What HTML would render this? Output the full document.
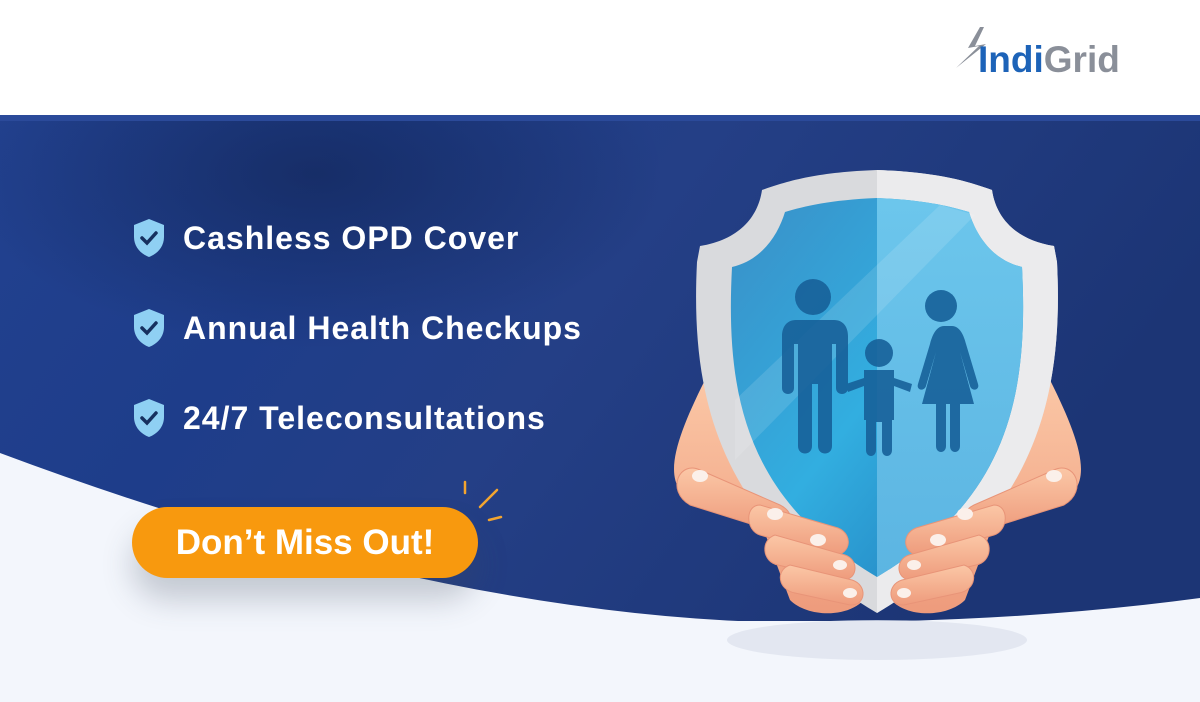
<!DOCTYPE html>
<html><head><meta charset="utf-8"><style>
*{margin:0;padding:0;box-sizing:border-box}
body{width:1200px;height:702px;overflow:hidden;background:#f3f6fc;font-family:"Liberation Sans",sans-serif;position:relative}
.hdr{position:absolute;left:0;top:0;width:1200px;height:115px;background:#fff}
.bar{position:absolute;left:0;top:115px;width:1200px;height:6px;background:#2b4a9a}
.item{position:absolute;left:132px;color:#fff;font-weight:bold;font-size:32px;display:flex;align-items:center;letter-spacing:1px}
.item svg{margin-right:17px}
.btn{position:absolute;left:132px;top:507px;width:346px;height:71px;border-radius:36px;background:#f8990e;color:#fff;font-weight:bold;font-size:35px;text-align:center;line-height:71px;box-shadow:0 22px 30px rgba(60,70,90,0.25)}
</style></head><body>
<div class="hdr"></div>
<div class="bar"></div>
<svg width="1200" height="702" style="position:absolute;left:0;top:0">
<defs>
<linearGradient id="bg" x1="0" y1="0" x2="1" y2="0.3">
<stop offset="0" stop-color="#22418f"/><stop offset="0.3" stop-color="#1e3d8a"/><stop offset="0.55" stop-color="#243f86"/><stop offset="1" stop-color="#1c3575"/></linearGradient>
<radialGradient id="dk" cx="0.45" cy="0.15" r="0.5"><stop offset="0" stop-color="#0f1e45" stop-opacity="0.5"/><stop offset="1" stop-color="#0f1e45" stop-opacity="0"/></radialGradient>
<linearGradient id="sl" x1="0" y1="0" x2="1" y2="1"><stop offset="0" stop-color="#3a8fc7"/><stop offset="0.5" stop-color="#32aee0"/><stop offset="1" stop-color="#1f78b8"/></linearGradient>
<linearGradient id="sr" x1="0" y1="0" x2="0" y2="1"><stop offset="0" stop-color="#6cc6ec"/><stop offset="1" stop-color="#5cb5e2"/></linearGradient>
<linearGradient id="hd" x1="0" y1="0" x2="0" y2="1"><stop offset="0" stop-color="#fbc7a6"/><stop offset="1" stop-color="#ee9b7c"/></linearGradient>
</defs>
<rect x="0" y="121" width="1200" height="500" fill="url(#bg)"/>
<rect x="0" y="121" width="700" height="350" fill="url(#dk)"/>
<path d="M0,453 Q420,610 760,622 Q1000,625 1200,598 L1200,702 L0,702Z" fill="#f3f6fc"/>
<g stroke="#f3a530" stroke-width="2.5" stroke-linecap="round">
<line x1="465" y1="482" x2="465" y2="493"/><line x1="497" y1="490" x2="480" y2="507"/><line x1="489" y1="520" x2="501" y2="517"/></g>
<ellipse cx="877" cy="640" rx="150" ry="20" fill="#dfe4ee" opacity="0.8"/>
<path d="M705,380 C680,430 665,470 680,490 C700,505 730,510 760,520 L790,600 C810,620 860,618 870,590 L862,540 C840,500 780,480 740,470 Z" fill="url(#hd)"/>
<path d="M1050,380 C1075,430 1090,470 1075,490 C1055,505 1025,510 995,520 L965,600 C945,620 895,618 885,590 L893,540 C915,500 975,480 1015,470 Z" fill="url(#hd)"/>
<path d="M877,170 C820,172 790,180 762,190 C758,218 738,240 700,246 L697,262 C690,400 720,520 877,613 C1034,520 1064,400 1057,262 L1054,246 C1016,240 996,218 992,190 C964,180 934,172 877,170Z" fill="#d9dadd"/>
<path d="M877,170 C934,172 964,180 992,190 C996,218 1016,240 1054,246 L1057,262 C1064,400 1034,520 877,613Z" fill="#ebebed"/>
<path d="M877,198 C830,200 805,206 785,212 C778,235 762,260 732,267 C725,400 748,500 877,577 C1006,500 1029,400 1022,267 C992,260 976,235 969,212 C949,206 924,200 877,198Z" fill="url(#sl)"/>
<path d="M877,198 C924,200 949,206 969,212 C976,235 992,260 1022,267 C1029,400 1006,500 877,577Z" fill="url(#sr)"/>
<path d="M735,400 L940,205 L975,215 L735,460Z" fill="#ffffff" opacity="0.12"/>
<g fill="#17619a" opacity="0.9">
<circle cx="813" cy="297" r="18"/>
<path d="M792,320 h42 c10,0 14,8 14,16 v52 c0,8 -12,8 -12,0 v-44 h-4 v102 c0,10 -14,10 -14,0 v-62 h-6 v62 c0,10 -14,10 -14,0 v-102 h-4 v44 c0,8 -12,8 -12,0 v-52 c0,-8 4,-16 14,-16z"/>
<circle cx="941" cy="306" r="16"/>
<path d="M930,326 h22 c8,0 12,10 14,18 l12,40 c2,6 -6,8 -8,2 l-10,-34 l14,52 h-14 v42 c0,8 -10,8 -10,0 v-42 h-4 v42 c0,8 -10,8 -10,0 v-42 h-14 l14,-52 l-10,34 c-2,6 -10,4 -8,-2 l12,-40 c2,-8 6,-18 14,-18z"/>
<circle cx="879" cy="353" r="14"/>
<path d="M864,370 h30 v50 h-2 v30 c0,8 -10,8 -10,0 v-28 h-6 v28 c0,8 -10,8 -10,0 v-30 h-2z"/>
<path d="M846,384 L864,378 L864,386 L848,392Z M894,378 L912,384 L910,392 L894,386Z"/>
</g>
<g fill="url(#hd)" stroke="#e89478" stroke-width="1">
<path d="M700,470 C680,460 665,490 690,505 L770,530 C790,535 800,515 780,505Z"/>
<path d="M760,505 C745,505 745,530 760,535 L830,555 C850,558 855,535 838,528Z"/>
<path d="M775,535 C760,540 762,562 778,565 L840,580 C858,582 860,560 845,555Z"/>
<path d="M790,565 C775,570 778,590 795,593 L850,605 C866,606 868,585 852,580Z"/>
<path d="M1054,470 C1074,460 1089,490 1064,505 L984,530 C964,535 954,515 974,505Z"/>
<path d="M994,505 C1009,505 1009,530 994,535 L924,555 C904,558 899,535 916,528Z"/>
<path d="M979,535 C994,540 992,562 976,565 L914,580 C896,582 894,560 909,555Z"/>
<path d="M964,565 C979,570 976,590 959,593 L904,605 C888,606 886,585 902,580Z"/>
</g>
<g fill="#fbf0ea">
<ellipse cx="700" cy="476" rx="8" ry="6"/><ellipse cx="775" cy="514" rx="8" ry="6"/><ellipse cx="818" cy="540" rx="8" ry="6"/><ellipse cx="840" cy="565" rx="7" ry="5"/><ellipse cx="850" cy="593" rx="7" ry="5"/>
<ellipse cx="1054" cy="476" rx="8" ry="6"/><ellipse cx="965" cy="514" rx="8" ry="6"/><ellipse cx="938" cy="540" rx="8" ry="6"/><ellipse cx="914" cy="565" rx="7" ry="5"/><ellipse cx="904" cy="593" rx="7" ry="5"/>
</g>
<path d="M980,27 L968,48 L979,46 L956,68 L986,44 L975,46 L984,27 Z" fill="#8a8f99"/>
<text x="978" y="72" font-family="Liberation Sans,sans-serif" font-weight="bold" font-size="37" fill="#1d63b8">Indi<tspan fill="#8a8f99">Grid</tspan></text>
</svg>
<div class="item" style="top:217px"><svg width="34" height="42" viewBox="0 0 34 42"><path d="M17,2 L32,8 V20 C32,30 25,37 17,40 C9,37 2,30 2,20 V8Z" fill="#8fd0f3"/><path d="M10,21 L15,26 L24,16" stroke="#16305f" stroke-width="3.5" fill="none" stroke-linecap="round"/></svg>Cashless OPD Cover</div>
<div class="item" style="top:307px"><svg width="34" height="42" viewBox="0 0 34 42"><path d="M17,2 L32,8 V20 C32,30 25,37 17,40 C9,37 2,30 2,20 V8Z" fill="#8fd0f3"/><path d="M10,21 L15,26 L24,16" stroke="#16305f" stroke-width="3.5" fill="none" stroke-linecap="round"/></svg>Annual Health Checkups</div>
<div class="item" style="top:397px"><svg width="34" height="42" viewBox="0 0 34 42"><path d="M17,2 L32,8 V20 C32,30 25,37 17,40 C9,37 2,30 2,20 V8Z" fill="#8fd0f3"/><path d="M10,21 L15,26 L24,16" stroke="#16305f" stroke-width="3.5" fill="none" stroke-linecap="round"/></svg>24/7 Teleconsultations</div>
<div class="btn">Don’t Miss Out!</div>
</body></html>
